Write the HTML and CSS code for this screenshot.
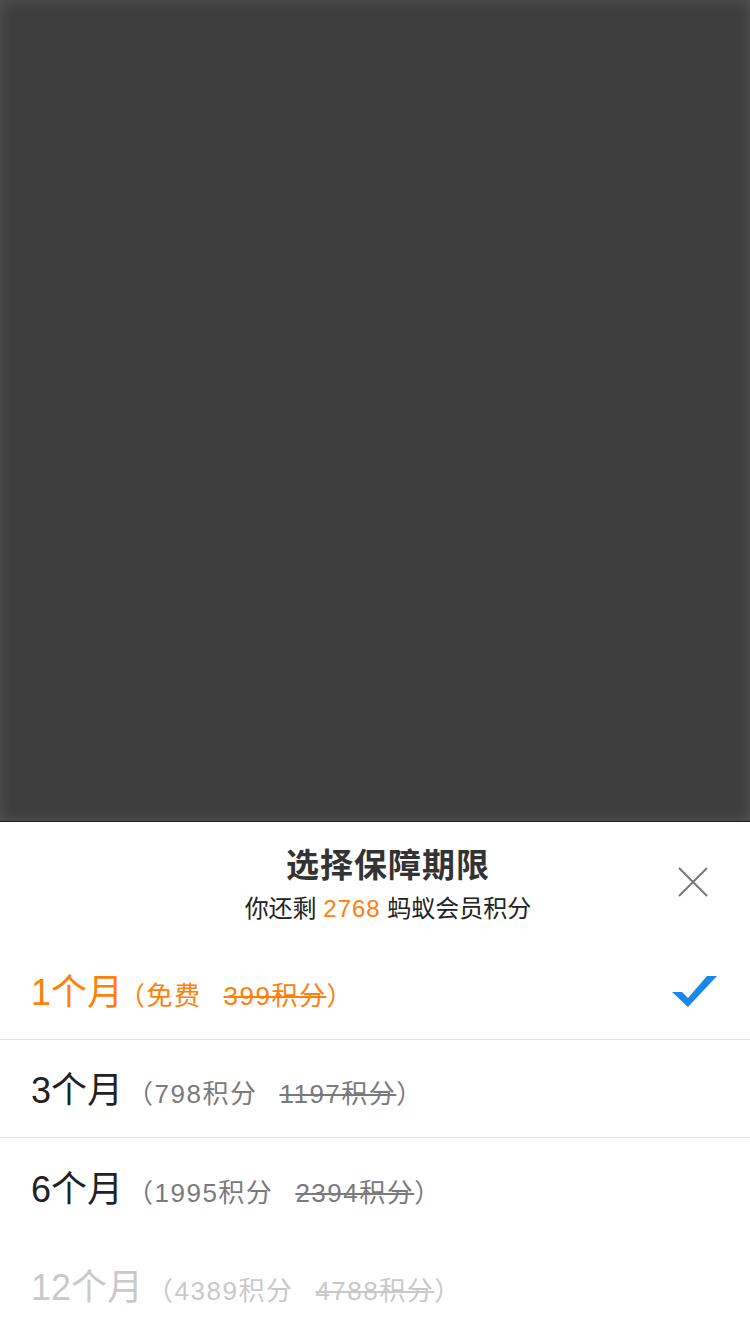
FILE: index.html
```html
<!DOCTYPE html>
<html lang="zh-CN">
<head>
    <meta charset="UTF-8">
    <meta name="viewport" content="width=device-width, initial-scale=1.0">
    <title>选择保障期限</title>
    <link rel="stylesheet" href="styles.css">
</head>
<body>
    <div class="mask"></div>

    <div class="sheet">
        <div class="sheet-header">
            <h2>选择保障期限</h2>
            <p class="balance">你还剩 <span class="points">2768</span> 蚂蚁会员积分</p>
            <button class="close-btn" aria-label="关闭">
                <svg width="30" height="30" viewBox="0 0 30 30">
                    <path d="M1 1 L29 29 M29 1 L1 29" stroke="#777" stroke-width="2" fill="none"/>
                </svg>
            </button>
        </div>

        <ul class="period-list">
            <li class="period-item active">
                <div class="period-text">
                    <span class="months">1个月</span>
                    <span class="price">（免费<s class="old-price">399积分</s>）</span>
                </div>
                <svg class="check" width="46" height="32" viewBox="0 0 46 32">
                    <polygon points="0,16 10,16 16,22 35,0 45,0 16,31" fill="#1a88e8"/>
                </svg>
            </li>
            <li class="period-item">
                <div class="period-text">
                    <span class="months">3个月</span>
                    <span class="price">（798积分<s class="old-price">1197积分</s>）</span>
                </div>
            </li>
            <li class="period-item no-line">
                <div class="period-text">
                    <span class="months">6个月</span>
                    <span class="price">（1995积分<s class="old-price">2394积分</s>）</span>
                </div>
            </li>
            <li class="period-item disabled">
                <div class="period-text">
                    <span class="months">12个月</span>
                    <span class="price">（4389积分<s class="old-price">4788积分</s>）</span>
                </div>
            </li>
        </ul>
    </div>
</body>
</html>
```

FILE: styles.css
```css
body {
    margin: 0;
    height: 100vh;
    display: flex;
    flex-direction: column;
    font-family: "Liberation Sans", "Noto Sans CJK SC", sans-serif;
    background-color: #fff;
}

.mask {
    flex: 1;
    background-color: #3e3e3e;
    box-shadow: inset 0 0 14px rgba(255, 255, 255, 0.12);
    border-bottom: 1px solid #1c1c1c;
}

.sheet {
    background-color: #fff;
}

.sheet-header {
    position: relative;
    height: 120px;
    box-sizing: border-box;
    padding: 24px 0 0 26px;
    text-align: center;
}

h2 {
    margin: 0;
    font-size: 33px;
    line-height: 40px;
    font-weight: 700;
    color: #333;
    letter-spacing: 1px;
}

.balance {
    margin: 8px 0 0;
    font-size: 24px;
    line-height: 30px;
    color: #222;
}

.points {
    color: #ff7e0f;
    letter-spacing: 1px;
}

.close-btn {
    position: absolute;
    top: 45px;
    right: 42px;
    width: 30px;
    height: 30px;
    padding: 0;
    border: none;
    background: none;
    cursor: pointer;
}

.close-btn svg {
    display: block;
}

.period-list {
    list-style: none;
    margin: 0;
    padding: 0;
}

.period-item {
    display: flex;
    align-items: center;
    justify-content: space-between;
    height: 98px;
    box-sizing: border-box;
    padding: 0 32px 3px 31px;
    border-bottom: 1px solid #e4e4e4;
}

.period-item.no-line,
.period-item.disabled {
    border-bottom: none;
}

.period-text {
    display: flex;
    align-items: baseline;
}

.months {
    font-size: 36px;
    color: #222;
}

.price {
    margin-left: 4px;
    font-size: 26px;
    color: #7a7a7a;
    letter-spacing: 1.5px;
}

.old-price {
    margin-left: 22px;
}

.period-item.active .months,
.period-item.active .price {
    color: #ff8008;
}

.period-item.active .price {
    margin-left: -4px;
}

.period-item.disabled .months,
.period-item.disabled .price {
    color: #c9c9c9;
}

.check {
    display: block;
    margin-top: 6px;
}
```
